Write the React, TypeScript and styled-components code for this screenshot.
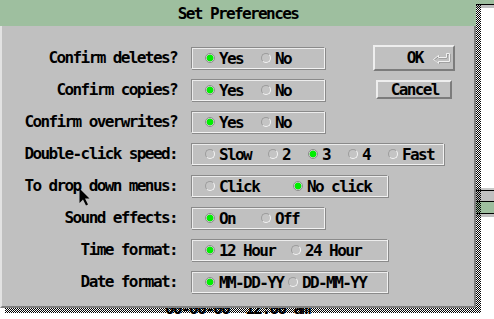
import React from "react";
import styled, { createGlobalStyle } from "styled-components";

const Global = createGlobalStyle`
  html, body { margin: 0; padding: 0; background: #ffffff; }
  body {
    width: 494px; height: 319px; overflow: hidden;
    font-family: "DejaVu Sans Mono", "Liberation Mono", monospace;
    font-weight: bold; font-size: 16px; letter-spacing: -1.6px; color: #000;
  }
`;

const Desktop = styled.div`
  position: relative;
  width: 494px;
  height: 319px;
  overflow: hidden;
  background: #ffffff;
`;

const BackStrip = styled.div<{ $top: number; $height: number; $bg: string }>`
  position: absolute;
  left: 470px;
  width: 30px;
  top: ${(p) => p.$top}px;
  height: ${(p) => p.$height}px;
  background: ${(p) => p.$bg};
`;

const BackText = styled.div`
  position: absolute;
  left: 165px;
  top: 301px;
  line-height: 16px;
  white-space: pre;
`;

const DialogWrap = styled.div`
  position: relative;
  width: 476px;
  height: 308px;
`;

const Shadow = styled.div`
  position: absolute;
  left: 5px;
  top: 5px;
  width: 476px;
  height: 308px;
  background: repeating-conic-gradient(#000 0 25%, transparent 0 50%) 0 0 / 2px 2px;
`;

const Dialog = styled.div`
  position: relative;
  box-sizing: border-box;
  width: 476px;
  height: 308px;
  background: #c0c0c0;
  border-style: solid;
  border-width: 2px;
  border-color: #e2e2e2 #808080 #808080 #e2e2e2;
  display: flex;
  flex-direction: column;
`;

const TitleBar = styled.div`
  height: 24px;
  line-height: 24px;
  background: #9ebf9f;
  text-align: center;
  margin-top: -2px;
  margin-left: -2px;
  margin-right: -2px;
  padding-top: 2px;
`;

const Form = styled.div`
  display: grid;
  grid-template-columns: 175px 1fr;
  grid-auto-rows: 22px;
  column-gap: 14px;
  row-gap: 10px;
  padding-top: 21px;
`;

const Label = styled.div<{ $row: number }>`
  grid-column: 1;
  grid-row: ${(p) => p.$row};
  text-align: right;
  line-height: 22px;
  white-space: nowrap;
`;

const GroupBox = styled.div<{ $row: number; $w: number }>`
  grid-column: 2;
  grid-row: ${(p) => p.$row};
  justify-self: start;
  box-sizing: border-box;
  width: ${(p) => p.$w}px;
  height: 22px;
  border: 1px solid;
  border-color: #8a8a8a #f2f2f2 #f2f2f2 #8a8a8a;
  box-shadow: inset 1px 1px 0 #ececec, 1px 1px 0 #8a8a8a;
  display: flex;
  align-items: center;
  padding-left: 13px;
`;

const Option = styled.div<{ $w?: number }>`
  display: flex;
  align-items: center;
  gap: 4px;
  flex: none;
  width: ${(p) => (p.$w ? `${p.$w}px` : "auto")};
  white-space: pre;
`;

const Radio = styled.span<{ $on: boolean }>`
  box-sizing: border-box;
  width: 10px;
  height: 10px;
  border-radius: 50%;
  border: 1px solid;
  border-color: ${(p) => (p.$on ? "#8c8c8c" : "#9c9c9c #f4f4f4 #f4f4f4 #9c9c9c")};
  background: ${(p) =>
    p.$on ? "radial-gradient(circle, #00ee00 0 3.4px, #d8d8d8 3.6px)" : "#c4c4c4"};
  flex: none;
`;

const ButtonStack = styled.div`
  grid-column: 2;
  grid-row: 1 / span 2;
  justify-self: end;
  align-self: start;
  margin-top: -2px;
  margin-right: 19px;
  display: flex;
  flex-direction: column;
  align-items: center;
  gap: 9px;
`;

const Button = styled.div<{ $w: number; $h: number; $bw: number }>`
  box-sizing: border-box;
  width: ${(p) => p.$w}px;
  height: ${(p) => p.$h}px;
  border-style: solid;
  border-width: ${(p) => p.$bw}px;
  border-color: #eeeeee #7c7c7c #7c7c7c #eeeeee;
  background: #c0c0c0;
  display: grid;
  grid-template-columns: 1fr auto 1fr;
  align-items: center;
  line-height: 16px;
`;

const ButtonText = styled.span`
  grid-column: 2;
  margin-right: -1.6px;
`;

const ButtonIcon = styled.svg`
  grid-column: 3;
  justify-self: end;
  margin-right: 2px;
`;

const Cursor = styled.svg`
  position: absolute;
  left: 79px;
  top: 188px;
`;

type Opt = { t: string; w?: number; on?: boolean };
type Row = { label: string; w: number; opts: Opt[] };

const rows: Row[] = [
  { label: "Confirm deletes?", w: 134, opts: [{ t: "Yes", w: 56, on: true }, { t: "No" }] },
  { label: "Confirm copies?", w: 134, opts: [{ t: "Yes", w: 56, on: true }, { t: "No" }] },
  { label: "Confirm overwrites?", w: 134, opts: [{ t: "Yes", w: 56, on: true }, { t: "No" }] },
  {
    label: "Double-click speed:",
    w: 253,
    opts: [
      { t: "Slow", w: 63 },
      { t: "2", w: 40 },
      { t: "3", w: 40, on: true },
      { t: "4", w: 40 },
      { t: "Fast" },
    ],
  },
  { label: "To drop down menus:", w: 197, opts: [{ t: "Click", w: 88 }, { t: "No click", on: true }] },
  { label: "Sound effects:", w: 134, opts: [{ t: "On", w: 56, on: true }, { t: "Off" }] },
  { label: "Time format:", w: 197, opts: [{ t: "12 Hour", w: 86, on: true }, { t: "24 Hour" }] },
  { label: "Date format:", w: 197, opts: [{ t: "MM-DD-YY", w: 83, on: true }, { t: "DD-MM-YY" }] },
];

export default function App() {
  return (
    <Desktop>
      <Global />
      <BackStrip $top={0} $height={8} $bg="linear-gradient(#9ebf9f 0 4px, #000 4px 5px, #c0c0c0 5px 8px)" />
      <BackStrip
        $top={188}
        $height={29}
        $bg="linear-gradient(#c8c8c8 0 2px, #000 2px 3px, #c0c0c0 3px 13px, #000 13px 14px, #9ebf9f 14px 25px, #000 25px 26px, #c0c0c0 26px 29px)"
      />
      <BackText>00-00-00  12:00 am</BackText>
      <DialogWrap>
        <Shadow />
        <Dialog>
          <TitleBar>Set Preferences</TitleBar>
          <Form>
            {rows.map((r, i) => (
              <React.Fragment key={r.label}>
                <Label $row={i + 1}>{r.label}</Label>
                <GroupBox $row={i + 1} $w={r.w}>
                  {r.opts.map((o) => (
                    <Option key={o.t} $w={o.w}>
                      <Radio $on={!!o.on} />
                      <span>{o.t}</span>
                    </Option>
                  ))}
                </GroupBox>
              </React.Fragment>
            ))}
            <ButtonStack>
              <Button $w={82} $h={26} $bw={2}>
                <ButtonText>OK</ButtonText>
                <ButtonIcon width="19" height="12" viewBox="0 0 19 12">
                  <path
                    d="M1.5 7.5 L6.5 3.5 L6.5 5.5 L14.5 5.5 L14.5 1.5 L17.5 1.5 L17.5 9.5 L6.5 9.5 L6.5 11.5 Z"
                    fill="none"
                    stroke="#8c8c8c"
                    strokeWidth="1"
                    transform="translate(0.6 0.6)"
                  />
                  <path
                    d="M1.5 7.5 L6.5 3.5 L6.5 5.5 L14.5 5.5 L14.5 1.5 L17.5 1.5 L17.5 9.5 L6.5 9.5 L6.5 11.5 Z"
                    fill="none"
                    stroke="#f2f2f2"
                    strokeWidth="1"
                  />
                </ButtonIcon>
              </Button>
              <Button $w={76} $h={19} $bw={2}>
                <ButtonText>Cancel</ButtonText>
              </Button>
            </ButtonStack>
          </Form>
        </Dialog>
      </DialogWrap>
      <Cursor width="12" height="19" viewBox="0 0 12 19">
        <path d="M0.5 0.5 L0.5 15 L4 11.5 L7 17.5 L9 16.5 L6 10.5 L10.5 10.5 Z" fill="#000" />
      </Cursor>
    </Desktop>
  );
}
